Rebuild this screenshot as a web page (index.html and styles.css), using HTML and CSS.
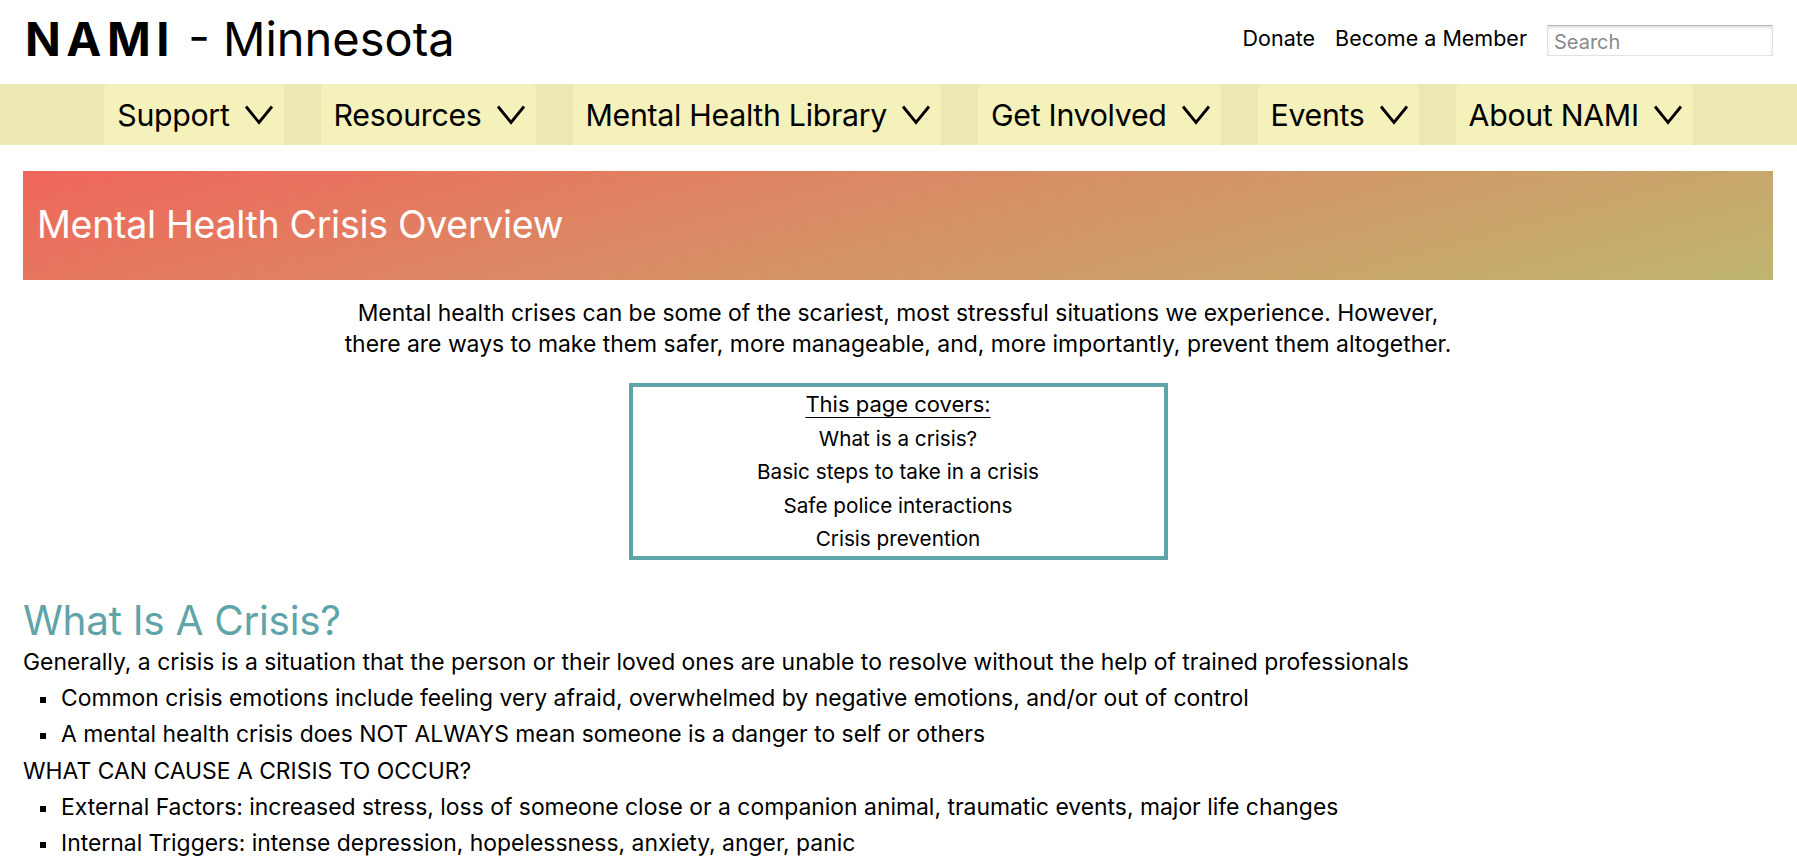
FILE: index.html
```html
<!DOCTYPE html>
<html lang="en">
<head>
<meta charset="utf-8">
<title>Mental Health Crisis Overview - NAMI Minnesota</title>
<link rel="stylesheet" href="styles.css">
</head>
<body>
<header class="site-header">
  <div class="brand"><span class="brand-strong">NAMI</span> - Minnesota</div>
  <div class="utility">
    <a class="utility-link" href="#">Donate</a>
    <a class="utility-link" href="#">Become a Member</a>
    <input class="search" type="text" placeholder="Search">
  </div>
</header>
<nav class="main-nav">
  <a class="nav-item" href="#">Support <svg class="chev" viewBox="0 0 30 20"><path d="M2 2 L15 18 L28 2"/></svg></a>
  <a class="nav-item" href="#">Resources <svg class="chev" viewBox="0 0 30 20"><path d="M2 2 L15 18 L28 2"/></svg></a>
  <a class="nav-item" href="#">Mental Health Library <svg class="chev" viewBox="0 0 30 20"><path d="M2 2 L15 18 L28 2"/></svg></a>
  <a class="nav-item" href="#">Get Involved <svg class="chev" viewBox="0 0 30 20"><path d="M2 2 L15 18 L28 2"/></svg></a>
  <a class="nav-item" href="#">Events <svg class="chev" viewBox="0 0 30 20"><path d="M2 2 L15 18 L28 2"/></svg></a>
  <a class="nav-item" href="#">About NAMI <svg class="chev" viewBox="0 0 30 20"><path d="M2 2 L15 18 L28 2"/></svg></a>
</nav>
<main class="content">
  <div class="banner"><h1 class="banner-title">Mental Health Crisis Overview</h1></div>
  <p class="intro">Mental health crises can be some of the scariest, most stressful situations we experience. However,<br>there are ways to make them safer, more manageable, and, more importantly, prevent them altogether.</p>
  <div class="covers">
    <div class="covers-title">This page covers:</div>
    <div class="covers-item">What is a crisis?</div>
    <div class="covers-item">Basic steps to take in a crisis</div>
    <div class="covers-item">Safe police interactions</div>
    <div class="covers-item">Crisis prevention</div>
  </div>
  <h2 class="section-title">What Is A Crisis?</h2>
  <p class="line">Generally, a crisis is a situation that the person or their loved ones are unable to resolve without the help of trained professionals</p>
  <ul class="list">
    <li>Common crisis emotions include feeling very afraid, overwhelmed by negative emotions, and/or out of control</li>
    <li>A mental health crisis does NOT ALWAYS mean someone is a danger to self or others</li>
  </ul>
  <p class="line">WHAT CAN CAUSE A CRISIS TO OCCUR?</p>
  <ul class="list">
    <li>External Factors: increased stress, loss of someone close or a companion animal, traumatic events, major life changes</li>
    <li>Internal Triggers: intense depression, hopelessness, anxiety, anger, panic</li>
  </ul>
</main>
</body>
</html>
```
FILE: styles.css
```css
* { box-sizing: border-box; }
html, body { margin: 0; padding: 0; background: #fff; }
body {
  font-family: Inter, "Liberation Sans", sans-serif;
  color: #000;
  font-size: 22.9px;
}
a { color: inherit; text-decoration: none; }

.site-header {
  display: flex;
  justify-content: space-between;
  align-items: flex-start;
  height: 84px;
  padding: 0 24px 0 25px;
}
.brand {
  font-size: 47px;
  line-height: 48px;
  padding-top: 15px;
  font-weight: 400;
}
.brand-strong { font-weight: 700; letter-spacing: 5.5px; }

.utility {
  display: flex;
  align-items: center;
  gap: 20px;
  padding-top: 25px;
}
.utility-link {
  font-size: 21.5px;
  line-height: 24px;
  margin-bottom: 5px;
}
.search {
  width: 226px;
  height: 31px;
  border: 1px solid #e2e2e2;
  border-top-color: #b5b5b5;
  box-shadow: inset 0 2px 3px rgba(0,0,0,0.12);
  font-family: inherit;
  font-size: 20px;
  padding: 2px 6px 0;
  color: #333;
  background: #fff;
}
.search::placeholder { color: #8a8a8a; }

.main-nav {
  display: flex;
  justify-content: center;
  gap: 37px;
  height: 61px;
  background: #ece7b4;
}
.nav-item {
  display: flex;
  align-items: center;
  gap: 14px;
  padding: 0 10px 0 13px;
  background: #f5f1bb;
  border-radius: 5px 5px 0 0;
  font-size: 30.3px;
  letter-spacing: -0.3px;
}
.chev {
  width: 30px;
  height: 21px;
  fill: none;
  stroke: #000;
  stroke-width: 2.8;
}

.content { padding: 26px 24px 0 23px; }

.banner {
  height: 109px;
  display: flex;
  align-items: center;
  padding-left: 14px;
  background: linear-gradient(165deg, #f0665a 0%, #d98c65 45%, #bfb570 100%);
}
.banner-title {
  margin: 0 0 3px;
  color: #fff;
  font-size: 37.5px;
  font-weight: 400;
  letter-spacing: -0.3px;
  line-height: 1.2;
}

.intro {
  text-align: center;
  font-size: 22.9px;
  line-height: 31px;
  margin: 18px 0 23px;
}

.covers {
  width: 539px;
  margin: 0 auto;
  border: 4px solid #5fa4a9;
  padding-top: 1px;
  text-align: center;
  font-size: 20.7px;
  line-height: 33.6px;
}
.covers-title {
  font-size: 22px;
  text-decoration: underline;
  text-decoration-thickness: 1px;
  text-underline-offset: 5px;
}

.section-title {
  margin: 38px 0 0;
  color: #5fa4a9;
  font-size: 40.5px;
  font-weight: 400;
  line-height: 46px;
  letter-spacing: -0.3px;
}
.line { margin: 0; line-height: 36.2px; }
.list {
  margin: 0;
  padding-left: 38px;
  list-style: none;
  line-height: 36.2px;
}
.list li::before {
  content: "";
  display: inline-block;
  width: 6px;
  height: 6px;
  background: #000;
  margin-left: -21px;
  margin-right: 15px;
  vertical-align: middle;
}
```
